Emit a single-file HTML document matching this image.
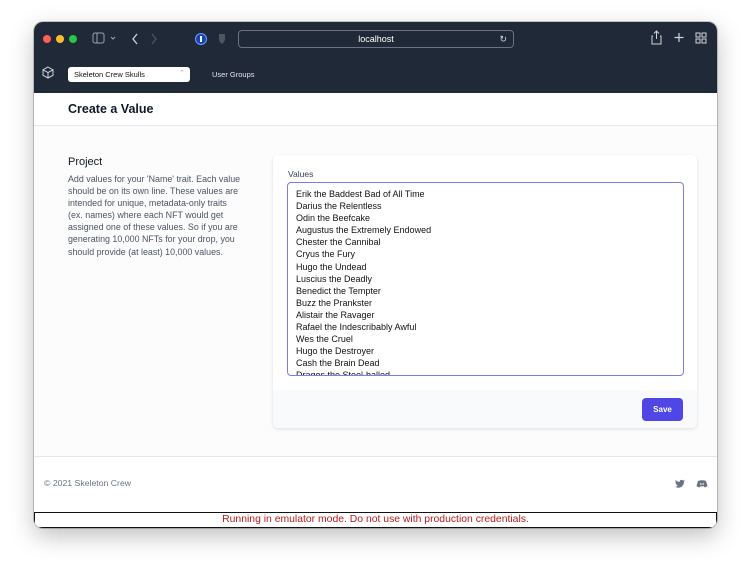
<!DOCTYPE html>
<html><head><style>
*{box-sizing:border-box;margin:0;padding:0}
body{width:751px;height:573px;background:#fff;font-family:"Liberation Sans",sans-serif;position:relative;overflow:hidden}
.win{position:absolute;left:34px;top:22px;width:683px;height:506px;border-radius:9px;overflow:hidden;background:#fff;box-shadow:0 8px 24px rgba(0,0,0,.25),0 0 0 1px rgba(0,0,0,.2)}
.top{position:absolute;left:0;top:0;width:683px;height:71px;background:#1f2937}
.dot{position:absolute;top:13px;width:8px;height:8px;border-radius:50%}
.url{position:absolute;left:204px;top:8px;width:276px;height:18px;border:1px solid #6b7280;border-radius:4px;color:#fff;font-size:9px;text-align:center;line-height:16px}
.sel{position:absolute;left:34px;top:45px;width:122px;height:15px;background:#fff;border-radius:3px;font-size:7.5px;color:#111;line-height:15px;padding-left:6px}
.ug{position:absolute;left:178px;top:48px;font-size:7.5px;color:#e5e7eb}
.hdr{position:absolute;left:0;top:71px;width:683px;height:33px;border-bottom:1px solid #e5e7eb}
.hdr h1{position:absolute;left:34px;top:9px;font-size:12.5px;font-weight:bold;color:#111827}
.main{position:absolute;left:0;top:104px;width:683px;height:331px;background:#fcfcfc;border-bottom:1px solid #e5e7eb}
.proj{position:absolute;left:34px;top:30px;font-size:11px;color:#111827}
.desc{position:absolute;left:34px;top:47px;width:175px;font-size:8.9px;line-height:12.1px;color:#4b5563}
.card{position:absolute;left:239px;top:29px;width:424px;height:273px;background:#fff;border-radius:5px;box-shadow:0 1px 3px rgba(0,0,0,.12);overflow:hidden}
.lbl{position:absolute;left:15px;top:14px;font-size:8.5px;color:#374151}
.ta{position:absolute;left:14px;top:27px;width:397px;height:194px;border:1.5px solid #7c7ee0;border-radius:4px;overflow:hidden;padding:5px 8px;font-size:9px;line-height:12.1px;color:#111}
.cf{position:absolute;left:0;top:235px;width:424px;height:38px;background:#f9fafb}
.save{position:absolute;right:14px;top:8px;width:41px;height:23px;background:#4f46e5;border-radius:4px;color:#fff;font-size:8px;font-weight:bold;text-align:center;line-height:23px}
.foot{position:absolute;left:10px;top:456px;font-size:8.7px;color:#6b7280}
.emu{position:absolute;left:0;top:490px;width:683px;height:16px;border:1px solid #111;background:#fff;color:#b91c1c;font-size:10.4px;text-align:center;line-height:14px}
</style></head><body>
<div class="win">
<div class="top">
<div class="dot" style="left:9px;background:#ff5f57"></div>
<div class="dot" style="left:22px;background:#febc2e"></div>
<div class="dot" style="left:35px;background:#28c840"></div>
<svg style="position:absolute;left:58px;top:10px" width="30" height="14"><rect x="1" y="1" width="11" height="10" rx="2" fill="none" stroke="#9ca3af"/><line x1="5" y1="1" x2="5" y2="11" stroke="#9ca3af"/><path d="M19 5l2 2 2-2" stroke="#9ca3af" fill="none"/></svg>
<svg style="position:absolute;left:96px;top:10px" width="30" height="14"><path d="M7 2l-4 5 4 5" stroke="#d1d5db" fill="none" stroke-width="1.3"/><path d="M22 2l4 5-4 5" stroke="#4b5563" fill="none" stroke-width="1.3"/></svg>
<svg style="position:absolute;left:161px;top:10px" width="40" height="14"><circle cx="6" cy="7" r="5.5" fill="#1e40af" stroke="#60a5fa"/><rect x="5" y="4" width="2" height="6" fill="#fff"/><path d="M24 2h6v5c0 3-3 5-3 5s-3-2-3-5z" fill="#4b5563"/></svg>
<div class="url">localhost<span style="position:absolute;right:6px;color:#d1d5db">↻</span></div>
<svg style="position:absolute;left:616px;top:8px" width="60" height="16"><path d="M3 6h-1v8h9v-8h-1M6.5 1v8M4 3.5l2.5-2.5 2.5 2.5" stroke="#d1d5db" fill="none"/><path d="M29 3v9M24.5 7.5h9" stroke="#d1d5db" stroke-width="1.2"/><g fill="none" stroke="#d1d5db"><rect x="46" y="3" width="4" height="4"/><rect x="52" y="3" width="4" height="4"/><rect x="46" y="9" width="4" height="4"/><rect x="52" y="9" width="4" height="4"/></g></svg>
<svg style="position:absolute;left:8px;top:44px" width="12" height="13"><path d="M6 1l5 2.8v5.5L6 12 1 9.3V3.8z M1 3.8L6 6.6 11 3.8 M6 6.6V12" stroke="#d1d5db" fill="none"/></svg>
<div class="sel">Skeleton Crew Skulls<span style="position:absolute;right:5px;top:-1px;color:#9ca3af;font-size:7px">⌃</span></div>
<div class="ug">User Groups</div>
</div>
<div class="hdr"><h1>Create a Value</h1></div>
<div class="main">
<div class="proj">Project</div>
<div class="desc">Add values for your 'Name' trait. Each value should be on its own line. These values are intended for unique, metadata-only traits (ex. names) where each NFT would get assigned one of these values. So if you are generating 10,000 NFTs for your drop, you should provide (at least) 10,000 values.</div>
<div class="card">
<div class="lbl">Values</div>
<div class="ta">Erik the Baddest Bad of All Time<br>Darius the Relentless<br>Odin the Beefcake<br>Augustus the Extremely Endowed<br>Chester the Cannibal<br>Cryus the Fury<br>Hugo the Undead<br>Luscius the Deadly<br>Benedict the Tempter<br>Buzz the Prankster<br>Alistair the Ravager<br>Rafael the Indescribably Awful<br>Wes the Cruel<br>Hugo the Destroyer<br>Cash the Brain Dead<br>Dragos the Steel-balled</div>
<div class="cf"><div class="save">Save</div></div>
</div>
</div>
<div class="foot">© 2021 Skeleton Crew</div>
<svg style="position:absolute;left:640px;top:456px" width="36" height="12"><path d="M10 2.5c-.4.2-.8.3-1.2.3.4-.3.8-.7.9-1.1-.4.2-.9.4-1.3.5C7.6 1.5 5.5 1.900 5.6 4 4 3.9 2.6 3.1 1.6 2c-.5 1 0 2.1.7 2.6-.3 0-.6-.1-.9-.2 0 1 .7 1.8 1.6 2-.3.1-.6.1-.9 0 .3.8 1 1.3 1.9 1.4-.8.7-1.9 1-3 .9 4.5 2.6 9-.2 9-5.2.4-.3.7-.6 1-1z" fill="#6b7280"/><path d="M24 3c2-1 6-1 8 0l1.5 5c-1 1-2 1.2-3 1.4l-.6-1h-3.8l-.6 1c-1-.2-2-.4-3-1.4z" fill="#6b7280"/><circle cx="26.8" cy="6" r=".8" fill="#fff"/><circle cx="29.2" cy="6" r=".8" fill="#fff"/></svg>
<div class="emu">Running in emulator mode. Do not use with production credentials.</div>
</div>
</body></html>
